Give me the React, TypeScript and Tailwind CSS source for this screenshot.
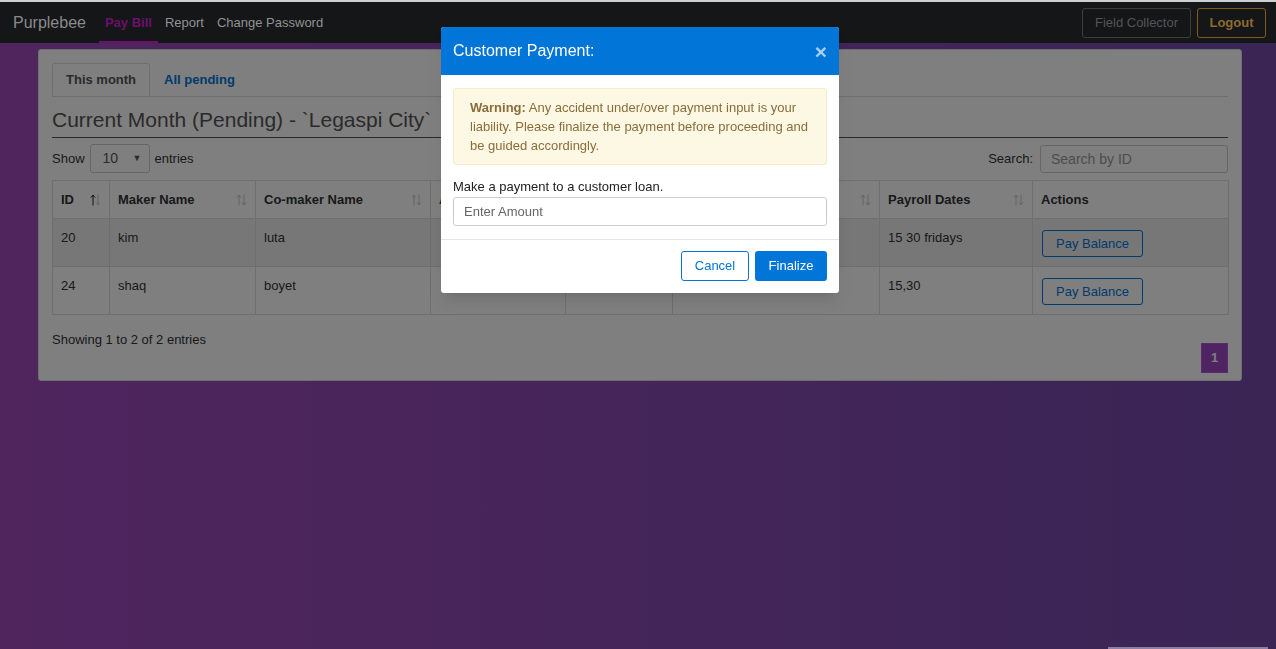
import { useState } from "react";

const columns = [
  { label: "ID", width: "w-[57px]", sort: true, active: true },
  { label: "Maker Name", width: "w-[146px]", sort: true },
  { label: "Co-maker Name", width: "w-[175px]", sort: true },
  { label: "Amount", width: "w-[135px]", sort: true },
  { label: "Term", width: "w-[107px]", sort: true },
  { label: "Address", width: "w-[207px]", sort: true },
  { label: "Payroll Dates", width: "w-[153px]", sort: true },
  { label: "Actions", width: "w-[196px]", sort: false },
];

const rows = [
  { id: "20", maker: "kim", comaker: "luta", amount: "", term: "", address: "", payroll: "15 30 fridays" },
  { id: "24", maker: "shaq", comaker: "boyet", amount: "", term: "", address: "", payroll: "15,30" },
];

function SortIcon({ active }: { active?: boolean }) {
  return (
    <svg className="ml-auto" width="11" height="12" viewBox="0 0 11 12" fill="none" strokeWidth="1">
      <g stroke={active ? "#222" : "#c8c8c8"}>
        <path d="M3 11.5V1" />
        <path d="M1 3.5L3 1L5 3.5" />
      </g>
      <g stroke="#c8c8c8">
        <path d="M8 0.5V11" />
        <path d="M6 8.5L8 11L10 8.5" />
      </g>
    </svg>
  );
}

export default function App() {
  const [amount, setAmount] = useState("");

  return (
    <div className="relative h-screen w-full overflow-hidden bg-linear-to-r from-[#a04abd] to-[#744aab] font-['Liberation_Sans',Arial,sans-serif] text-[13px] text-[#333]">
      {/* Navbar */}
      <nav className="relative z-50 flex h-[43px] items-center border-t-2 border-[#cfcfcf] bg-[#141618] pl-[13px] pr-[10px]">
        <span className="text-[16px] text-[#8a8a8a]">Purplebee</span>
        <div className="ml-[13px] flex h-full items-stretch">
          <a className="relative flex items-center px-[6px] font-bold text-[#6d0f6d]">
            Pay Bill
            <span className="absolute bottom-0 left-0 right-0 h-[2px] bg-[#6d0f6d]" />
          </a>
          <a className="flex items-center px-[7px] text-[#929292]">Report</a>
          <a className="flex items-center px-[6px] text-[#929292]">Change Password</a>
        </div>
        <div className="ml-auto flex items-center gap-[6px]">
          <button className="h-[30px] w-[109px] rounded-[3px] border border-[#3d3d3d] text-[#555]">
            Field Collector
          </button>
          <button className="h-[30px] w-[69px] rounded-[3px] border border-[#7e5c1e] font-bold text-[#8e6a2e]">
            Logout
          </button>
        </div>
      </nav>

      {/* Page */}
      <main className="ml-[38px] mt-[6px] w-[1204px] rounded-[3px] border border-[#ddd] bg-white px-[13px] pb-[7px] pt-[13px]">
        <div className="flex border-b border-[#ddd]">
          <div className="-mb-px flex h-[33px] items-center rounded-t-[3px] border border-b-white border-[#ddd] bg-white px-[13px] font-bold text-[#555]">
            This month
          </div>
          <div className="flex h-[33px] items-center px-[14px] font-bold text-[#0275d8]">All pending</div>
        </div>

        <h2 className="mt-[8px] border-b border-[#555] pb-[2px] text-[21px] leading-[30px] text-[#555]">
          Current Month (Pending) - `Legaspi City`
        </h2>

        <div className="mt-[6px] flex items-center justify-between">
          <div className="flex items-center gap-[5px]">
            <span>Show</span>
            <div className="flex h-[29px] w-[60px] items-center justify-between rounded-[3px] border border-[#ccc] pl-[12px] pr-[7px] text-[14px] text-[#555]">
              <span>10</span>
              <span className="text-[9px]">▼</span>
            </div>
            <span>entries</span>
          </div>
          <div className="flex items-center gap-[7px]">
            <span>Search:</span>
            <input
              className="h-[28px] w-[188px] rounded-[3px] border border-[#ccc] px-[10px] text-[14px] outline-none placeholder:text-[#999]"
              placeholder="Search by ID"
            />
          </div>
        </div>

        <table className="mt-[7px] w-full table-fixed border-collapse border border-[#ddd]">
          <thead>
            <tr>
              {columns.map((c) => (
                <th key={c.label} className={`${c.width} h-[38px] border border-[#ddd] px-[8px] text-left font-bold text-[#333]`}>
                  <div className="flex items-center">
                    <span>{c.label}</span>
                    {c.sort && <SortIcon active={c.active} />}
                  </div>
                </th>
              ))}
            </tr>
          </thead>
          <tbody>
            {rows.map((r, i) => (
              <tr key={r.id} className={i === 0 ? "bg-[#eee]" : "bg-white"}>
                {[r.id, r.maker, r.comaker, r.amount, r.term, r.address, r.payroll].map((v, j) => (
                  <td key={j} className="border border-[#ddd] px-[8px] py-[9px] align-top leading-[20px]">
                    {v}
                  </td>
                ))}
                <td className="border border-[#ddd] px-[9px] py-[9px] align-top">
                  <button className="mt-[2px] h-[27px] w-[101px] rounded-[3px] border border-[#0275d8] text-[#0275d8]">
                    Pay Balance
                  </button>
                </td>
              </tr>
            ))}
          </tbody>
        </table>

        <div className="mt-[10px] flex items-start justify-between">
          <span className="pt-[5px] leading-[20px]">Showing 1 to 2 of 2 entries</span>
          <span className="mt-[18px] flex h-[30px] w-[27px] items-center justify-center border border-[#b058d8] bg-[#9c48c4] font-bold text-white">
            1
          </span>
        </div>
      </main>

      {/* Backdrop */}
      <div className="fixed inset-0 z-40 bg-black/50" />

      {/* Modal */}
      <div className="fixed left-[441px] top-[27px] z-50 w-[398px] overflow-hidden rounded-[3px] bg-white shadow-lg">
        <div className="flex h-[48px] items-center justify-between bg-[#0275d8] px-[12px]">
          <h3 className="text-[16px] font-light text-white">Customer Payment:</h3>
          <span className="text-[21px] font-bold leading-none text-white/65">×</span>
        </div>
        <div className="px-[12px] pb-[13px] pt-[13px]">
          <div className="rounded-[3px] border border-[#faebcc] bg-[#fcf8e3] py-[9px] pl-[16px] pr-[8px] leading-[19px] text-[#8a6d3b]">
            <strong>Warning:</strong> Any accident under/over payment input is your
            <br />
            liability. Please finalize the payment before proceeding and
            <br />
            be guided accordingly.
          </div>
          <label className="mt-[12px] block leading-[20px] text-[#222]">Make a payment to a customer loan.</label>
          <input
            value={amount}
            onChange={(e) => setAmount(e.target.value)}
            className="h-[29px] w-full rounded-[3px] border border-[#ccc] px-[10px] text-[13px] outline-none placeholder:text-[#666]"
            placeholder="Enter Amount"
          />
        </div>
        <div className="flex justify-end gap-[6px] border-t border-[#e5e5e5] px-[12px] pb-[12px] pt-[11px]">
          <button className="h-[30px] w-[68px] rounded-[3px] border border-[#0275d8] text-[#0275d8]">Cancel</button>
          <button className="h-[30px] w-[72px] rounded-[3px] bg-[#0275d8] text-white">Finalize</button>
        </div>
      </div>

      <div className="fixed bottom-0 left-[1108px] z-50 h-[2px] w-[160px] bg-[#8e7fa0]" />
    </div>
  );
}
